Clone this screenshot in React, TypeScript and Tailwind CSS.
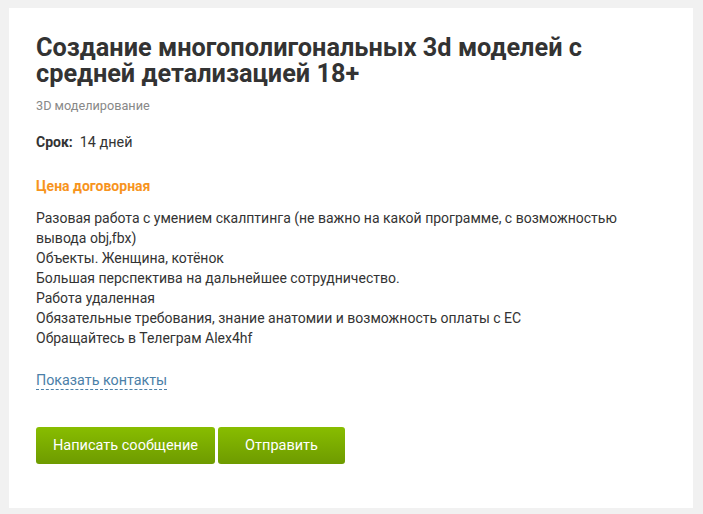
const lines = [
  "Разовая работа с умением скалптинга (не важно на какой программе, с возможностью вывода obj,fbx)",
  "Объекты. Женщина, котёнок",
  "Большая перспектива на дальнейшее сотрудничество.",
  "Работа удаленная",
  "Обязательные требования, знание анатомии и возможность оплаты с ЕС",
  "Обращайтесь в Телеграм Alex4hf",
];

const App = () => {
  return (
    <div className="min-h-[514px] bg-[#f1f1f1] pt-2 pl-[9px] pr-[10px] pb-[6px] font-['Roboto',sans-serif] text-[#333]">
      <div className="bg-white h-[500px] pl-[27px] pr-[40px] pt-[27px]">
        <h1 className="text-[25.3px] leading-[26px] font-bold text-[#333] pr-[40px]">
          Создание многополигональных 3d моделей с средней детализацией 18+
        </h1>
        <div className="mt-[11px] text-[12.7px] leading-[16px] text-[#888]">3D моделирование</div>
        <div className="mt-[19px] text-[14px] leading-[18px]">
          <span className="font-bold">Срок:</span>
          <span className="ml-[7px] text-[14.4px]">14 дней</span>
        </div>
        <div className="mt-[25px] text-[14px] leading-[18px] font-bold text-[#f7941d]">Цена договорная</div>
        <div className="mt-[13px] text-[14px] leading-[20px] pr-[10px]">
          {lines.map((l) => (
            <div key={l}>{l}</div>
          ))}
        </div>
        <div className="mt-[23px] text-[14.3px] leading-[18px]">
          <span className="text-[#4b80a8] border-b border-dashed border-[#4b80a8] pb-[1px]">Показать контакты</span>
        </div>
        <div className="mt-[38px] flex gap-[3px]">
          <button className="w-[179px] h-[37px] rounded-[3px] bg-gradient-to-b from-[#88bd00] to-[#6e9b00] text-white text-[14.5px]">
            Написать сообщение
          </button>
          <button className="w-[127px] h-[37px] rounded-[3px] bg-gradient-to-b from-[#88bd00] to-[#6e9b00] text-white text-[14.5px]">
            Отправить
          </button>
        </div>
      </div>
    </div>
  );
};

export default App;
